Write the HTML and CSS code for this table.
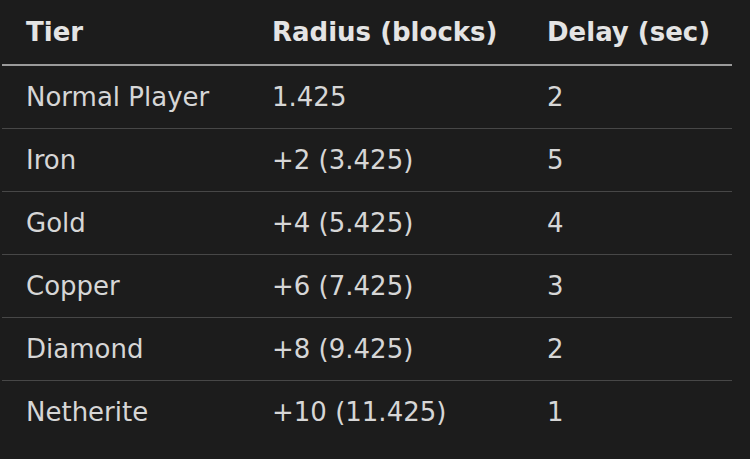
FILE: index.html
```html
<!DOCTYPE html>
<html lang="en">

<head>
  <meta charset="UTF-8">
  <title>Tier Radius</title>
  <link rel="stylesheet" href="styles.css">
</head>

<body>
  <table class="tiers">
    <thead>
      <tr>
        <th class="col-tier">Tier</th>
        <th class="col-radius">Radius (blocks)</th>
        <th>Delay (sec)</th>
      </tr>
    </thead>
    <tbody>
      <tr><td>Normal Player</td><td>1.425</td><td>2</td></tr>
      <tr><td>Iron</td><td>+2 (3.425)</td><td>5</td></tr>
      <tr><td>Gold</td><td>+4 (5.425)</td><td>4</td></tr>
      <tr><td>Copper</td><td>+6 (7.425)</td><td>3</td></tr>
      <tr><td>Diamond</td><td>+8 (9.425)</td><td>2</td></tr>
      <tr><td>Netherite</td><td>+10 (11.425)</td><td>1</td></tr>
    </tbody>
  </table>
</body>

</html>
```

FILE: styles.css
```css
body {
  margin: 0;
  background: #1c1c1c;
  font-family: "DejaVu Sans", "Open Sans", sans-serif;
  color: #d6d6d6;
}

.tiers {
  width: 730px;
  margin-left: 2px;
  border-collapse: collapse;
  font-size: 26px;
}

.tiers th,
.tiers td {
  text-align: left;
  padding: 0 0 0 24px;
  white-space: nowrap;
}

.tiers th {
  height: 64px;
  font-weight: 700;
  color: #e4e4e4;
  border-bottom: 2px solid #9a9a9a;
}

.tiers td {
  height: 62px;
  border-bottom: 1px solid #474747;
}

.tiers tbody tr:last-child td {
  border-bottom: none;
}

.col-tier {
  width: 222px;
}

.col-radius {
  width: 251px;
}
```
